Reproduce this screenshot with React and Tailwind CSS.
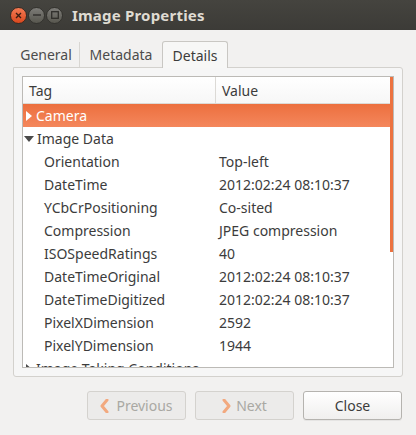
import React from 'react';

const rows = [
  ['Orientation', 'Top-left'],
  ['DateTime', '2012:02:24 08:10:37'],
  ['YCbCrPositioning', 'Co-sited'],
  ['Compression', 'JPEG compression'],
  ['ISOSpeedRatings', '40'],
  ['DateTimeOriginal', '2012:02:24 08:10:37'],
  ['DateTimeDigitized', '2012:02:24 08:10:37'],
  ['PixelXDimension', '2592'],
  ['PixelYDimension', '1944'],
];

function TitleButton({ kind }) {
  if (kind === 'close') {
    return (
      <div className="w-[17px] h-[17px] rounded-full bg-gradient-to-b from-[#f47a52] to-[#d9471c] border border-[#3a2a22] flex items-center justify-center">
        <svg width="7" height="7" viewBox="0 0 7 7"><path d="M1 1L6 6M6 1L1 6" stroke="#3b1d12" strokeWidth="1.4" /></svg>
      </div>
    );
  }
  return (
    <div className="w-[17px] h-[17px] rounded-full bg-gradient-to-b from-[#7d7c78] to-[#58574f] border border-[#33322e] flex items-center justify-center">
      {kind === 'min' ? (
        <svg width="8" height="2" viewBox="0 0 8 2"><path d="M0 1H8" stroke="#302f2b" strokeWidth="1.4" /></svg>
      ) : (
        <svg width="8" height="8" viewBox="0 0 8 8"><rect x="0.7" y="0.7" width="6.6" height="6.6" fill="none" stroke="#302f2b" strokeWidth="1.3" /></svg>
      )}
    </div>
  );
}

function Chevron({ dir }) {
  return (
    <svg width="9" height="14" viewBox="0 0 9 14">
      <path d={dir === 'left' ? 'M7 1L2 7L7 13' : 'M2 1L7 7L2 13'} fill="none" stroke="#f2a97f" strokeWidth="3" strokeLinecap="round" strokeLinejoin="round" />
    </svg>
  );
}

export default function App() {
  return (
    <div className="w-[416px] h-[435px] bg-[#f2f1f0] flex flex-col text-[#3c3c3c] overflow-hidden" style={{ fontFamily: '"Noto Sans", "DejaVu Sans", sans-serif' }}>
      <div className="h-[30px] bg-gradient-to-b from-[#45443f] to-[#3c3b37] flex items-center pl-[10px] gap-[1px] shrink-0">
        <TitleButton kind="close" />
        <TitleButton kind="min" />
        <TitleButton kind="max" />
        <span className="ml-[8px] text-[15px] font-bold text-[#dfdbd2] tracking-[0.2px]">Image Properties</span>
      </div>

      <div className="flex-1 flex flex-col px-[13px] pt-[10px]">
        <div className="flex items-end h-[27px] text-[14px]">
          <div className="w-[67px] h-[25px] flex items-center justify-center border-r border-[#d8d6d2] text-[#4c4c4c]">General</div>
          <div className="w-[82px] h-[25px] flex items-center justify-center text-[#4c4c4c]">Metadata</div>
          <div className="w-[66px] h-[27px] flex items-center justify-center bg-[#f7f7f6] border border-b-0 border-[#c9c7c3] rounded-t-[3px] relative top-[1px]">Details</div>
        </div>
        <div className="h-[310px] bg-[#f6f6f6] border border-[#d3d1cd] rounded-b-[3px] rounded-tr-[3px] px-[8px] pt-[8px]">
          <div className="h-[292px] bg-white border border-[#bcbab6] flex flex-col relative overflow-hidden text-[14px]">
            <div className="h-[27px] flex shrink-0 bg-gradient-to-b from-white to-[#f7f7f7] border-b border-[#dcdad6]">
              <div className="w-[193px] border-r border-[#dcdad6] pl-[6px] flex items-center">Tag</div>
              <div className="flex-1 pl-[6px] flex items-center">Value</div>
            </div>
            <div className="h-[23px] shrink-0 flex items-center bg-gradient-to-b from-[#ec6f3e] to-[#f4875c] text-white">
              <svg className="ml-[2px] mr-[3px]" width="8" height="10" viewBox="0 0 8 10"><path d="M1 0L7 5L1 10Z" fill="#fff" /></svg>
              <span>Camera</span>
            </div>
            <div className="h-[23px] shrink-0 flex items-center">
              <svg className="ml-[1px] mr-[3px]" width="10" height="8" viewBox="0 0 10 8"><path d="M0 1H10L5 7Z" fill="#4a4a4a" /></svg>
              <span>Image Data</span>
            </div>
            {rows.map(([tag, value]) => (
              <div key={tag} className="h-[23px] shrink-0 flex items-center">
                <span className="w-[196px] pl-[21px] whitespace-nowrap">{tag}</span>
                <span className="whitespace-nowrap">{value}</span>
              </div>
            ))}
            <div className="h-[23px] shrink-0 flex items-center">
              <svg className="ml-[2px] mr-[3px]" width="8" height="10" viewBox="0 0 8 10"><path d="M1 0L7 5L1 10Z" fill="#4a4a4a" /></svg>
              <span>Image Taking Conditions</span>
            </div>
            <div className="absolute right-0 top-0 w-[3px] h-[175px] bg-[#ec7240]" />
          </div>
        </div>

        <div className="flex justify-end gap-[9px] pt-[14px] pr-[1px] text-[14px]">
          <button className="w-[99px] h-[29px] rounded-[3px] border border-[#d4d2ce] bg-[#ecebea] text-[#a9a8a3] flex items-center justify-center gap-[7px]">
            <Chevron dir="left" />
            <span>Previous</span>
          </button>
          <button className="w-[99px] h-[29px] rounded-[3px] border border-[#d4d2ce] bg-[#ecebea] text-[#a9a8a3] flex items-center justify-center gap-[5px]">
            <Chevron dir="right" />
            <span>Next</span>
          </button>
          <button className="w-[99px] h-[29px] rounded-[3px] border border-[#b5b3af] bg-gradient-to-b from-white to-[#f0efee] text-[#3c3c3c] flex items-center justify-center shadow-[0_1px_0_rgba(0,0,0,0.05)]">
            Close
          </button>
        </div>
      </div>
    </div>
  );
}
